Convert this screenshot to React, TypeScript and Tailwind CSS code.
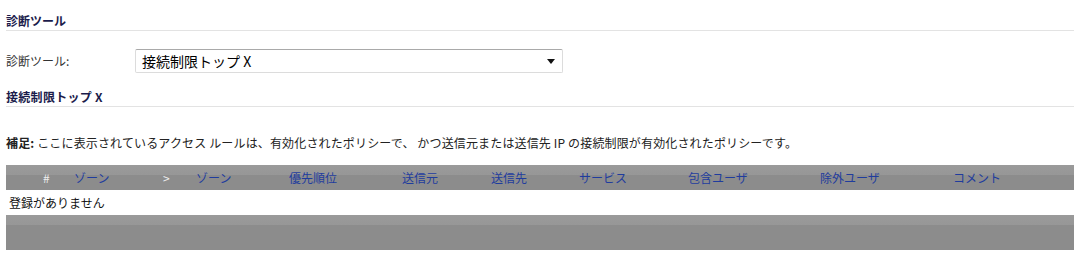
const columns = [
  { label: "#", width: "w-[31px]", light: true },
  { label: "ゾーン", width: "w-[89px]" },
  { label: ">", width: "w-[33px]", light: true },
  { label: "ゾーン", width: "w-[93px]" },
  { label: "優先順位", width: "w-[113px]" },
  { label: "送信元", width: "w-[89px]" },
  { label: "送信先", width: "w-[88px]" },
  { label: "サービス", width: "w-[109px]" },
  { label: "包含ユーザ", width: "w-[132px]" },
  { label: "除外ユーザ", width: "w-[133px]" },
  { label: "コメント", width: "flex-1" },
];

const SectionTitle = ({ children, className = "" }: { children: React.ReactNode; className?: string }) => (
  <h2 className={`text-[12px] leading-[16px] font-bold text-[#1b1b4b] pb-[1px] border-b border-[#e3e3e3] ${className}`}>
    {children}
  </h2>
);

export default function App() {
  return (
    <div
      className="w-[1081px] h-[256px] bg-white pl-[6px] pr-[7px] text-[12px] text-[#222] overflow-hidden"
      style={{ fontFamily: '"Noto Sans CJK JP", "Noto Sans", sans-serif' }}
    >
      <SectionTitle className="pt-[13px]">診断ツール</SectionTitle>

      <div className="mt-[18px] flex items-center h-[24px]">
        <div className="w-[129px] text-[#333] leading-[16px]">診断ツール:</div>
        <div className="w-[428px] h-[24px] border border-[#dcdcdc] border-t-[#a9a9a9] rounded-[2px] flex items-center justify-between pl-[6px] pr-[6px]">
          <span className="text-[14px] text-black leading-[16px]">接続制限トップ X</span>
          <svg width="8" height="5" viewBox="0 0 8 5" className="mr-[1px]">
            <path d="M0 0 H8 L4 5 Z" fill="#111" />
          </svg>
        </div>
      </div>

      <SectionTitle className="mt-[16px] tracking-[0.3px]">接続制限トップ X</SectionTitle>

      <p className="mt-[28px] leading-[16px] text-[#222] tracking-[0.15px]">
        <span className="font-bold">補足:</span> ここに表示されているアクセス ルールは、有効化されたポリシーで、 かつ送信元または送信先 IP の接続制限が有効化されたポリシーです。
      </p>

      <div className="mt-[14px]">
        <div className="h-[25px] flex items-center pl-[37px] bg-[linear-gradient(to_bottom,#9a9a9a_0px,#979797_10px,#8c8c8c_10px,#8c8c8c_100%)]">
          {columns.map((c, i) => (
            <div
              key={i}
              className={`${c.width} shrink-0 leading-[16px] text-[12px] ${c.light ? "text-[#eeeeee]" : "text-[#1f3c9e]"}`}
            >
              {c.label}
            </div>
          ))}
        </div>
        <div className="h-[25px] flex items-center pl-[3px] text-[#111] leading-[16px]">登録がありません</div>
        <div className="h-[35px] bg-[linear-gradient(to_bottom,#9a9a9a_0px,#979797_10px,#8c8c8c_10px,#8c8c8c_100%)]" />
      </div>
    </div>
  );
}
